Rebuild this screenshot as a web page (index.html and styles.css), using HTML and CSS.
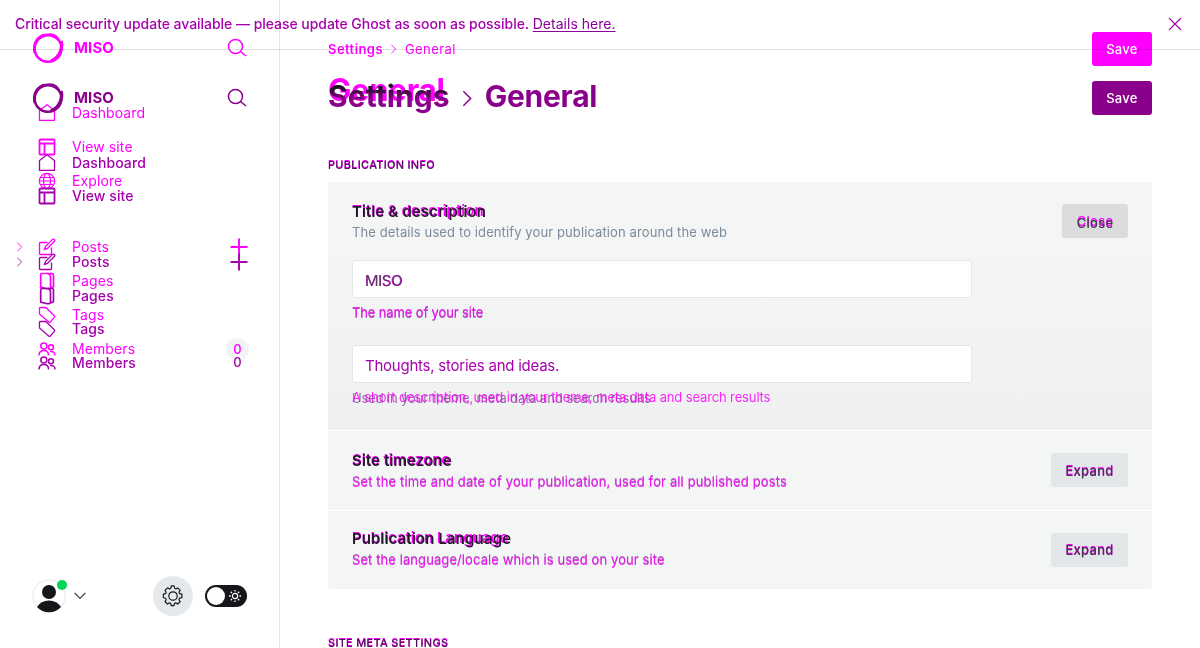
FILE: index.html
```html
<!DOCTYPE html>
<html lang="en">
<head>
<meta charset="utf-8">
<title>Settings - General - MISO</title>
<link rel="stylesheet" href="styles.css">
</head>
<body>
<svg class="defs" width="0" height="0">
  <symbol id="logo" viewBox="0 0 32 32"><g fill="none" stroke="currentColor"><ellipse cx="16" cy="16.500" rx="13.500" ry="13.300" stroke-width="2.400"/><path d="M4 9C7 4 11 2 18 1.800c5 0 8 3 10 7" stroke-width="1.300"/><path d="M29 9c2.500 9-3 17-10 20" stroke-width="3.400"/><path d="M3 21C1 12 5 6 12 3" stroke-width="3"/><path d="M3 20c2 6 7 10 13 10.300" stroke-width="1.500"/></g></symbol>
  <symbol id="search" viewBox="0 0 20 20"><g fill="none" stroke="currentColor" stroke-width="1.500"><circle cx="8.500" cy="8.500" r="7"/><path d="M13.500 13.500l5.500 4.500"/></g></symbol>
  <symbol id="home" viewBox="0 0 18 18"><path d="M1.500 6.500L9 .8l7.500 5.700v9.800h-15z" fill="none" stroke="currentColor" stroke-width="1.300"/></symbol>
  <symbol id="site" viewBox="0 0 18 18"><path d="M2.500 1.500h13q1 0 1 1v13q0 1-1 1h-13q-1 0-1-1v-13q0-1 1-1zM1.500 5.500h15M6.500 5.500v11" fill="none" stroke="currentColor" stroke-width="1.800"/></symbol>
  <symbol id="globe" viewBox="0 0 18 18"><g fill="none" stroke="currentColor" stroke-width="1.200"><circle cx="9" cy="9" r="7.700"/><ellipse cx="9" cy="9" rx="3.500" ry="7.500"/><path d="M1.500 9h15M2.500 5.500h13M2.500 12.500h13"/></g></symbol>
  <symbol id="edit" viewBox="0 0 18 18"><path d="M9.500 4.500H2.500q-1 0-1 1v10q0 1 1 1h10q1 0 1-1V9.500M6.500 11.500l1-3L14.300 1.600q1-1 2 0t0 2L9.500 10.500z" fill="none" stroke="currentColor" stroke-width="1.350"/></symbol>
  <symbol id="pages" viewBox="0 0 18 18"><path d="M4 1.500h6q2.500 1 2.500 3V15q0 1.700-1.500 1.700H9L2.700 15V3Q2.700 1.500 4 1.500zM8 1.500h6q1.500 0 1.500 1.500v11q0 1.500-2.500 1.500" fill="none" stroke="currentColor" stroke-width="1.700"/></symbol>
  <symbol id="tag" viewBox="0 0 18 18"><path d="M2 1.500h5q1 0 1.700.8l7.600 7.500q.8.800 0 1.600l-4 4.600q-.8.700-1.600 0L1.500 8V2z" fill="none" stroke="currentColor" stroke-width="1.300"/></symbol>
  <symbol id="members" viewBox="0 0 18 18"><g fill="none" stroke="currentColor" stroke-width="1.500"><circle cx="5.800" cy="6" r="3"/><path d="M1 15.500q0-5 4.800-5t4.800 5"/><circle cx="13" cy="7.300" r="2.500"/><path d="M12 11.500q5-.5 5 4"/></g></symbol>
  <symbol id="chev" viewBox="0 0 8 14"><path d="M1 1l6 6-6 6" fill="none" stroke="currentColor" stroke-width="1.200"/></symbol>
  <symbol id="plus" viewBox="0 0 18 18"><path d="M9 .5v17M.5 9h17" fill="none" stroke="currentColor" stroke-width="1.900"/></symbol>
</svg>
<div class="screen">
  <div class="layer prior">
    <nav class="side">
      <div class="brand"><svg class="logo"><use href="#logo"/></svg><b>MISO</b><svg class="search"><use href="#search"/></svg></div>
      <a class="row"><svg class="ico"><use href="#home"/></svg>Dashboard</a>
      <a class="row"><svg class="ico"><use href="#site"/></svg>View site</a>
      <a class="row"><svg class="ico"><use href="#globe"/></svg>Explore</a>
      <a class="row group"><svg class="tiny"><use href="#chev"/></svg><svg class="ico"><use href="#edit"/></svg>Posts<svg class="plus"><use href="#plus"/></svg></a>
      <a class="row"><svg class="ico"><use href="#pages"/></svg>Pages</a>
      <a class="row"><svg class="ico"><use href="#tag"/></svg>Tags</a>
      <a class="row"><svg class="ico"><use href="#members"/></svg>Members<span class="count">0</span></a>
    </nav>
    <main class="main">
      <div class="crumbs"><div class="trail"><b>Settings</b><svg class="tiny"><use href="#chev"/></svg><span>General</span></div><span class="save">Save</span></div>
      <h1 class="title">General</h1>
    </main>
  </div>
  <div class="layer current">
    <header class="banner"><span>Critical security update available — please update Ghost as soon as possible. <a class="link">Details here.</a></span><svg class="x" viewBox="0 0 14 14"><path d="M1 1l12 12M13 1L1 13" fill="none" stroke="currentColor" stroke-width="1.100"/></svg></header>
    <div class="body">
    <nav class="side">
      <div class="brand"><svg class="logo"><use href="#logo"/></svg><b>MISO</b><svg class="search"><use href="#search"/></svg></div>
      <a class="row"><svg class="ico"><use href="#home"/></svg>Dashboard</a>
      <a class="row"><svg class="ico"><use href="#site"/></svg>View site</a>
      <a class="row group"><svg class="tiny"><use href="#chev"/></svg><svg class="ico"><use href="#edit"/></svg>Posts<svg class="plus"><use href="#plus"/></svg></a>
      <a class="row"><svg class="ico"><use href="#pages"/></svg>Pages</a>
      <a class="row"><svg class="ico"><use href="#tag"/></svg>Tags</a>
      <a class="row"><svg class="ico"><use href="#members"/></svg>Members<span class="count">0</span></a>
      <div class="foot">
        <svg class="avatar" viewBox="0 0 36 34"><circle cx="17" cy="17" r="16.300" fill="#fff" stroke="#e5e9ed"/><circle cx="17" cy="13" r="7" fill="#15171a"/><path d="M5 28q4-6.500 12-6.500T29 28q-5 5.300-12 5.300T5 28z" fill="#15171a"/><circle cx="30" cy="6" r="5" fill="#00d45b"/></svg>
        <svg class="down" viewBox="0 0 12 8"><path d="M.7 1L6 6.500 11.300 1" fill="none" stroke="#394047" stroke-width="1.100"/></svg>
        <span class="gear"><svg viewBox="0 0 24 24"><g fill="none" stroke="#15171a" stroke-width="1.300" stroke-linejoin="round"><circle cx="12" cy="12" r="4.600"/><path d="M13.500 2.800a1.600 1.600 0 0 0 2.600 1.100l1-.8 2.800 2.700-1 1.300a1.600 1.600 0 0 0 1.100 2.500l1.700.3v3.900l-1.700.3a1.600 1.600 0 0 0-1.100 2.600l1 1.300-2.800 2.800-1.200-.9a1.600 1.600 0 0 0-2.500 1l-.3 1.700h-3l-.3-1.700a1.600 1.600 0 0 0-2.500-1l-1.300.9-2.700-2.800.9-1.300a1.600 1.600 0 0 0-1-2.500l-1.700-.3v-4l1.700-.3a1.600 1.600 0 0 0 1-2.500l-.9-1.300 2.800-2.700 1.200.8a1.600 1.600 0 0 0 2.500-1.100L10.100 1h3.100z"/></g></svg></span>
        <span class="toggle"><span class="knob"></span><svg viewBox="0 0 14 14"><g fill="none" stroke="#fff"><circle cx="7" cy="7" r="2.600" stroke-width="1.200"/><path d="M7 1v1.600M7 11.400V13M1 7h1.600M11.400 7H13M2.800 2.800L4 4M10 10l1.200 1.200M2.800 11.200L4 10M10 4l1.200-1.200" stroke-width="1.300"/></g></svg></span>
      </div>
    </nav>
    <main class="main">
      <div class="head"><h1 class="path"><span class="from">Settings</span><svg class="sep"><use href="#chev"/></svg><span>General</span></h1><span class="save">Save</span></div>
      <h2 class="label stack"><span class="was">PUBLICATION INFO</span><span>PUBLICATION INFO</span></h2>
      <div class="panel">
        <section class="item open">
          <div class="copy">
            <h3 class="name stack"><span class="was">Title &amp; description</span><span>Title &amp; description</span></h3>
            <p class="desc first">The details used to identify your publication around the web</p>
            <div class="field stack one"><span class="was">MISO</span><span>MISO</span></div>
            <p class="hint stack"><span class="was">The name of your site</span><span>The name of your site</span></p>
            <div class="field two">Thoughts, stories and ideas.</div>
            <p class="hint stack last"><span class="was">A short description, used in your theme, meta data and search results</span><span>Used in your theme, meta data and search results</span></p>
          </div>
          <span class="btn close stack"><span class="was">Close</span><span>Close</span></span>
        </section>
        <section class="item zone">
          <div class="copy">
            <h3 class="name stack"><span class="was">Site timezone</span><span>Site timezone</span></h3>
            <p class="desc stack"><span class="was">Set the time and date of your publication, used for all published posts</span><span>Set the time and date of your publication, used for all published posts</span></p>
          </div>
          <span class="btn stack"><span class="was">Expand</span><span>Expand</span></span>
        </section>
        <section class="item lang">
          <div class="copy">
            <h3 class="name stack"><span class="was">Publication Language</span><span>Publication Language</span></h3>
            <p class="desc stack"><span class="was">Set the language/locale which is used on your site</span><span>Set the language/locale which is used on your site</span></p>
          </div>
          <span class="btn stack"><span class="was">Expand</span><span>Expand</span></span>
        </section>
      </div>
      <h2 class="label meta stack"><span class="was">SITE META SETTINGS</span><span>SITE META SETTINGS</span></h2>
    </main>
    </div>
  </div>
</div>
</body>
</html>
```
FILE: styles.css
```css
* { box-sizing: border-box; }
body { margin: 0; background: #fff; font: 14px/20px Inter, sans-serif; overflow: hidden; }
h1, h2, h3, p { margin: 0; }
svg { display: block; flex: none; }
.defs { position: absolute; }
.screen { display: grid; width: 1200px; height: 648px; overflow: hidden; }
.layer { grid-area: 1 / 1; min-width: 0; height: 648px; }
.prior { display: grid; grid-template-columns: 280px 1fr; color: #f0f; }
.current { display: flex; flex-direction: column; color: #a600ac; }
.body { flex: 1; display: grid; grid-template-columns: 280px 1fr; min-height: 0; }

.banner { height: 50px; flex: none; display: flex; align-items: center; justify-content: space-between; padding: 0 18px 1px 15px; border-bottom: 1px solid #dddfe0; font-weight: 450; letter-spacing: -.04px; mix-blend-mode: multiply; font-weight: 500; }
.link { font-weight: 400; text-decoration: underline; text-underline-offset: 2px; color: #8c009b; letter-spacing: .03px; }
.x { width: 14px; height: 14px; }

.side { display: flex; flex-direction: column; padding: 32px 32px 0; }
.prior .side { border-right: 1px solid #e3e6e9; padding-right: 31px; }
.brand { display: flex; align-items: center; height: 32px; margin-bottom: 32px; font-size: 15px; }
.logo { width: 32px; height: 32px; }
.brand b { margin-left: 10px; flex: 1; font-weight: 700; letter-spacing: .1px; }
.search { width: 20px; height: 20px; margin-right: 1px; }
.current .brand { color: #8b008b; }
.row { display: flex; align-items: center; height: 34px; flex: none; padding-left: 6px; letter-spacing: .1px; }
.current .row { height: 33.600px; font-weight: 500; }
.ico { width: 18px; height: 18px; margin-right: 16px; }
.group { margin-top: 32px; }
.current .side { height: 598px; padding-bottom: 32px; }
.row .tiny { margin: 0 15px 0 -22px; }
.tiny { width: 7px; height: 10px; }
.plus { width: 18px; height: 18px; margin-left: auto; }
.count { margin-left: auto; margin-right: -1px; width: 23px; height: 23px; line-height: 23px; border-radius: 50%; text-align: center; font-size: 13px; font-weight: 500; }
.prior .count { background: #f1f3f4; }

.foot { display: flex; align-items: center; height: 40px; margin-top: auto; transform: translateY(0); margin-bottom: 0; }
.current .foot { margin-bottom: 0; }
.avatar { width: 36px; height: 34px; }
.down { width: 12px; height: 8px; margin-left: 6px; }
.gear { width: 40px; height: 40px; display: grid; place-items: center; border-radius: 50%; background: #e5e9ec; margin-left: 67px; }
.gear svg { width: 22px; height: 22px; }
.toggle { display: flex; align-items: center; justify-content: space-between; width: 42px; height: 22px; border-radius: 11px; background: #15171a; margin-left: 12px; padding: 0 5px 0 2px; flex: none; }
.knob { width: 18px; height: 18px; border-radius: 50%; background: #fff; }
.toggle svg { width: 14px; height: 14px; }

.main { padding: 32px 48px 0; min-width: 0; }
.crumbs, .head { display: flex; align-items: center; justify-content: space-between; height: 34px; }
.trail { display: flex; align-items: center; font-size: 13px; letter-spacing: .43px; }
.trail b { font-weight: 600; }
.trail .tiny { margin: 0 8px 0 7px; }
.save { width: 60px; height: 34px; border-radius: 3px; line-height: 34px; text-align: center; font-size: 13px; font-weight: 500; letter-spacing: .3px; color: #fff; background: #f0f; }
.title { font: 700 31px/40px Inter, sans-serif; letter-spacing: -.2px; margin-top: 4px; }
.current .main { padding-top: 31px; }
.path { display: flex; align-items: center; font: 700 30px/36px Inter, sans-serif; color: #8b008b; margin-top: -4px; letter-spacing: .08px; }
.path .from { color: transparent; background: linear-gradient(#25122a 30%, #8b008b 58%); -webkit-background-clip: text; background-clip: text; }
.path span:last-child { letter-spacing: -.25px; }
.sep { width: 10px; height: 17px; margin: 4px 13px 0 12px; }
.current .save { background: #8b008b; }

.stack { display: grid; }
.stack > span { grid-area: 1 / 1; }
.was { color: #f0f; }
.label { font: 500 11px/16px Inter, sans-serif; letter-spacing: .28px; color: #51165c; margin-top: 42px; }
.label .was { margin-top: -1px; }
.panel { margin-top: 9px; display: grid; gap: 1px; border-radius: 3px; overflow: hidden; }
.item { display: flex; justify-content: space-between; align-items: flex-start; background: #f4f6f6; padding: 0 24px; }
.open { height: 248px; padding-top: 20px; background: linear-gradient(#f4f6f6 30%, #eff1f1); }
.zone { height: 79px; padding-top: 20px; }
.lang { height: 78px; padding-top: 18px; }
.copy { width: 620px; }
.name { font: 600 15px/20px Inter, sans-serif; color: #24182c; letter-spacing: .13px; }
.name .was { margin: -1px 0 1px 0; letter-spacing: 0; }
.desc { font-size: 13px; line-height: 20px; color: #9c84a8; letter-spacing: .13px; white-space: nowrap; }
.desc.first { color: #7c8b9a; letter-spacing: .11px; }
.desc .was { margin-top: 1px; }
.lang .desc { letter-spacing: .09px; }
.desc .was, .hint .was { opacity: .85; }
.field { width: 620px; height: 38px; border: 1px solid #e3e7ea; border-radius: 3px; background: #fff; padding: 0 12px; font-size: 15px; line-height: 38px; letter-spacing: -.24px; }
.one { margin-top: 18px; color: #5d3768; line-height: 39px; }
.one .was { letter-spacing: -.5px; }
.two { margin-top: 23px; padding-top: 1px; }
.hint { font-size: 13px; line-height: 20px; letter-spacing: -.13px; color: #9768a6; margin-top: 4px; white-space: nowrap; }
.hint .was { margin-top: 0; }
.hint > span:last-child { padding-top: 1px; margin-bottom: -1px; }
.btn { margin-top: 2px; width: 77px; height: 34px; border-radius: 3px; background: #e2e6e9; text-align: center; font-size: 13px; font-weight: 500; line-height: 36px; letter-spacing: .25px; color: #463650; flex: none; }
.btn .was { margin-top: -1px; }
.close { width: 66px; background: #dadcde; line-height: 38px; }
.close .was { margin-top: -2px; }
.lang .btn { margin-top: 4px; line-height: 35px; }
.meta { margin-top: 46px; }
```
